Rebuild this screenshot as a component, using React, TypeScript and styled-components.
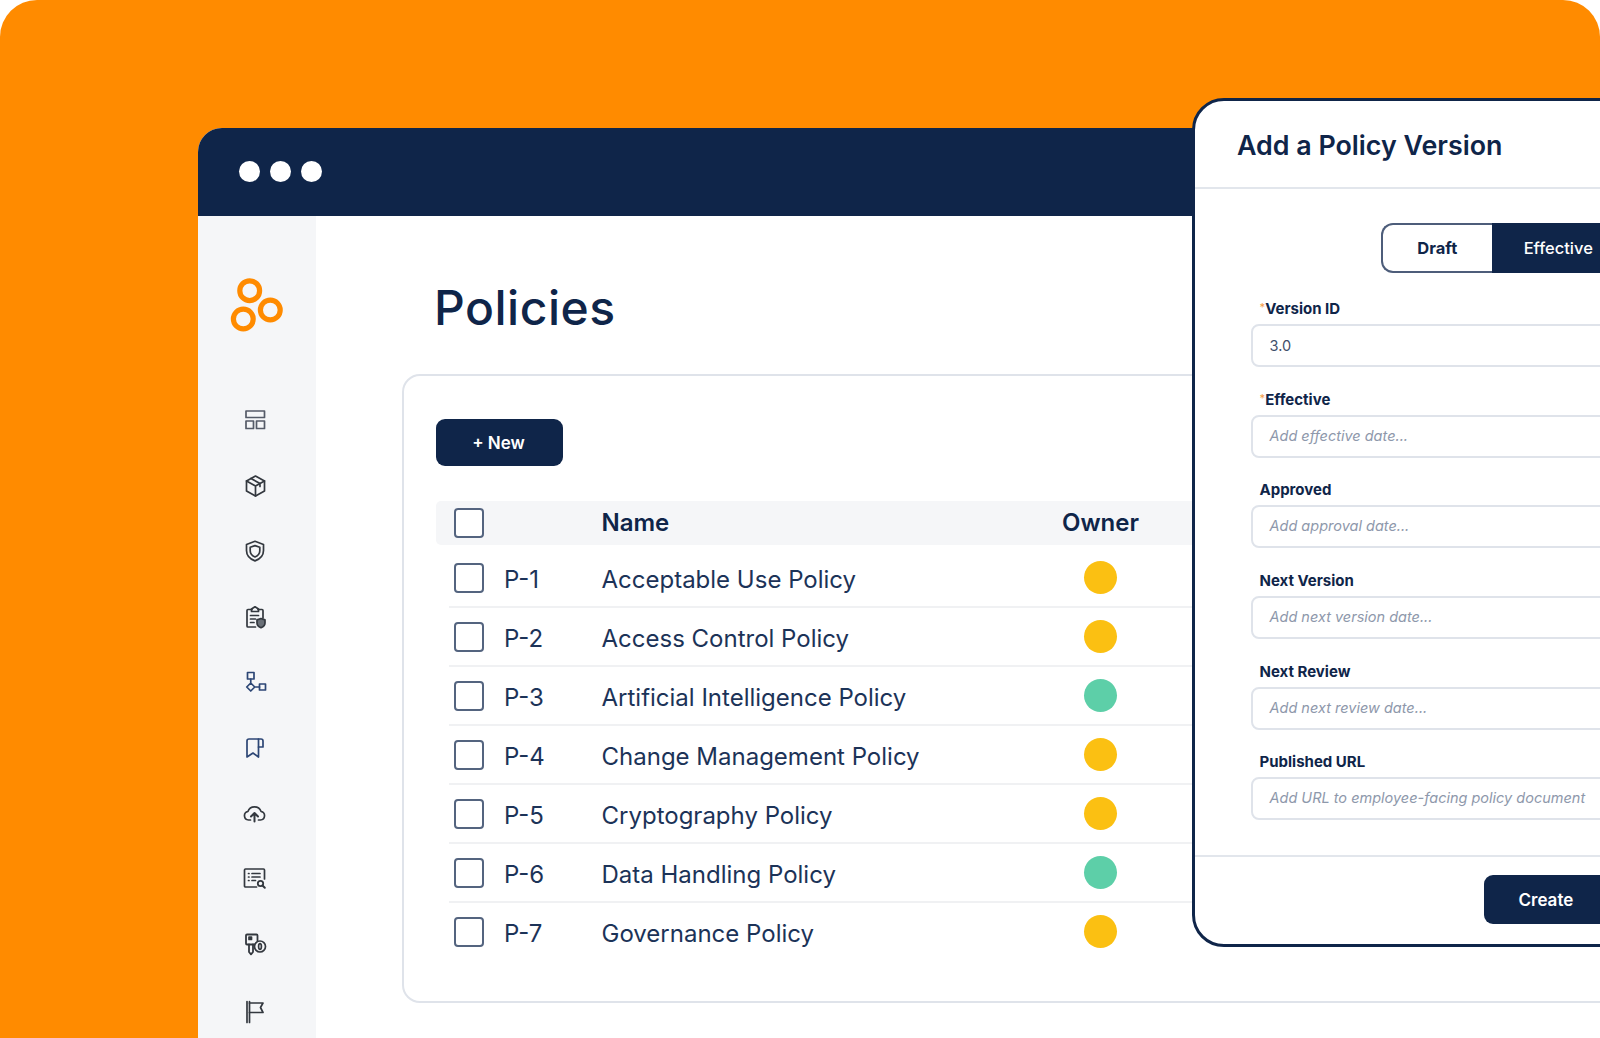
import React from "react";
import styled, { createGlobalStyle, css } from "styled-components";

const navy = "#0f2549";
const orange = "#ff8b00";

const GlobalStyle = createGlobalStyle`
  html, body {
    margin: 0;
    padding: 0;
    background: #fff;
    font-family: Inter, "Liberation Sans", sans-serif;
    color: ${navy};
  }
`;

const Stage = styled.div`
  width: 1600px;
  height: 1038px;
  box-sizing: border-box;
  padding: 128px 0 0 198px;
  background: ${orange};
  border-radius: 37px 37px 0 0;
  overflow: hidden;
`;

const AppWindow = styled.div`
  position: relative;
  width: 1402px;
  height: 910px;
  display: flex;
  flex-direction: column;
  background: #fff;
  border-radius: 24px 0 0 0;
`;

const TitleBar = styled.div`
  flex: none;
  height: 88px;
  box-sizing: border-box;
  padding: 0 0 1px 41px;
  display: flex;
  align-items: center;
  gap: 10px;
  background: ${navy};
  border-radius: 24px 0 0 0;
`;

const Dot = styled.span`
  width: 21px;
  height: 21px;
  border-radius: 50%;
  background: #fff;
`;

const Body = styled.div`
  flex: 1;
  display: flex;
  min-height: 0;
`;

const Sidebar = styled.nav`
  flex: none;
  width: 118px;
  box-sizing: border-box;
  padding-top: 62px;
  display: flex;
  flex-direction: column;
  align-items: center;
  background: #f5f6f8;
`;

const Logo = styled.svg`
  flex: none;
  width: 54px;
  height: 56px;
  margin-bottom: 53px;
`;

const IconList = styled.div`
  flex: none;
  display: grid;
  grid-auto-rows: 65.8px;
  justify-items: center;
  align-items: center;
  padding-right: 5px;
`;

const NavIcon = styled.svg<{ $tone?: string }>`
  width: 24px;
  height: 24px;
  fill: none;
  stroke: ${({ $tone }) => $tone || "#33383f"};
  stroke-width: 1.7;
  stroke-linejoin: round;
  stroke-linecap: round;
  overflow: visible;
`;

const Main = styled.main`
  flex: 1;
  min-width: 0;
  padding: 62px 0 0 86px;
`;

const PageTitle = styled.h1`
  margin: 0 0 36px 32px;
  font-size: 48px;
  line-height: 60px;
  font-weight: 500;
  letter-spacing: 0.5px;
  color: ${navy};
`;

const Card = styled.section`
  width: 1300px;
  height: 629px;
  box-sizing: border-box;
  padding: 43px 0 0 32px;
  border: 2px solid #dfe3ea;
  border-radius: 18px;
`;

const NewButton = styled.button`
  display: block;
  width: 127px;
  height: 47px;
  padding: 0 2px 0 0;
  border: 0;
  border-radius: 9px;
  background: ${navy};
  color: #fff;
  font: 600 17px Inter, sans-serif;
`;

const tableColumns = css`
  display: grid;
  grid-template-columns: 48px 99.5px 465.5px 67px;
  align-items: center;
`;

const HeadRow = styled.div`
  ${tableColumns}
  height: 44px;
  margin-top: 35px;
  padding-left: 18px;
  background: #f5f6f8;
  border-radius: 5px;
  font-size: 24px;
  font-weight: 600;
  color: ${navy};
`;

const HeadCell = styled.span<{ $center?: boolean }>`
  margin-top: -2px;
  justify-self: ${({ $center }) => ($center ? "center" : "start")};
`;

const Row = styled.div<{ $last?: boolean }>`
  ${tableColumns}
  height: 59px;
  box-sizing: border-box;
  margin-left: 13px;
  padding-left: 5px;
  border-bottom: 2px solid ${({ $last }) => ($last ? "transparent" : "#f0f1f3")};
  font-size: 24px;
  color: #1c3358;
`;

const Rows = styled.div`
  margin-top: 4px;
`;

const IdCell = styled.span`
  padding: 3px 0 0 2px;
`;

const NameCell = styled.span`
  padding-top: 3px;
`;

const Checkbox = styled.span`
  display: block;
  width: 30px;
  height: 30px;
  box-sizing: border-box;
  border: 2px solid #54647f;
  border-radius: 4px;
  background: #fff;
`;

const Owner = styled.span<{ $color: string }>`
  justify-self: center;
  width: 33.5px;
  height: 33.5px;
  border-radius: 50%;
  background: ${({ $color }) => $color};
`;

const Modal = styled.aside`
  position: absolute;
  top: -30px;
  left: 993.5px;
  width: 520px;
  height: 849px;
  box-sizing: border-box;
  display: flex;
  flex-direction: column;
  background: #fff;
  border: 3px solid ${navy};
  border-radius: 32px;
`;

const ModalHeader = styled.header`
  flex: none;
  height: 88px;
  box-sizing: border-box;
  padding: 2px 0 0 42.5px;
  display: flex;
  align-items: center;
  border-bottom: 2px solid #e2e6ec;
`;

const ModalTitle = styled.h2`
  margin: 0;
  font-size: 26.8px;
  font-weight: 600;
  color: ${navy};
`;

const Toggle = styled.div`
  display: flex;
  height: 50px;
  margin: 34px 0 0 186.5px;
`;

const ToggleOption = styled.div<{ $active?: boolean }>`
  display: flex;
  align-items: center;
  box-sizing: border-box;
  justify-content: ${({ $active }) => ($active ? "flex-start" : "center")};
  width: ${({ $active }) => ($active ? "220px" : "112.5px")};
  padding-left: ${({ $active }) => ($active ? "32px" : "0")};
  font-size: 16.5px;
  font-weight: ${({ $active }) => ($active ? 500 : 700)};
  color: ${({ $active }) => ($active ? "#fff" : navy)};
  background: ${({ $active }) => ($active ? navy : "#fff")};
  border: ${({ $active }) => ($active ? "none" : "2px solid #4d5d7a")};
  border-right: none;
  border-radius: ${({ $active }) => ($active ? "0" : "12px 0 0 12px")};
`;

const Form = styled.div`
  margin: 24px 0 0 56px;
  display: grid;
  grid-auto-rows: 70px;
  row-gap: 20.7px;
`;

const Field = styled.div`
  display: flex;
  flex-direction: column;
`;

const Label = styled.div`
  height: 22px;
  margin: 0 0 5px 9px;
  font-size: 15px;
  line-height: 24px;
  font-weight: 700;
  color: ${navy};
`;

const Required = styled.span`
  font-size: 11px;
  font-weight: 500;
  line-height: 0;
  vertical-align: 3px;
  color: #f7a04b;
`;

const Input = styled.div<{ $filled?: boolean }>`
  width: 440px;
  height: 43px;
  box-sizing: border-box;
  padding: 0 0 ${({ $filled }) => ($filled ? "0" : "2px")} 17px;
  display: flex;
  align-items: center;
  border: 2px solid #dfe3ea;
  border-radius: 8px;
  font-size: 14.5px;
  font-style: ${({ $filled }) => ($filled ? "normal" : "italic")};
  color: ${({ $filled }) => ($filled ? "#3f4f6b" : "#8e98ab")};
`;

const Footer = styled.footer`
  margin-top: 35px;
  padding: 18px 0 0 289px;
  border-top: 2px solid #e2e6ec;
`;

const CreateButton = styled.button`
  display: block;
  width: 200px;
  height: 49px;
  padding: 0 0 0 35px;
  border: 0;
  border-radius: 9px;
  background: ${navy};
  color: #fff;
  font: 600 17px Inter, sans-serif;
  text-align: left;
`;

const policies = [
  { id: "P-1", name: "Acceptable Use Policy", color: "#fbc012" },
  { id: "P-2", name: "Access Control Policy", color: "#fbc012" },
  { id: "P-3", name: "Artificial Intelligence Policy", color: "#5dcfa8" },
  { id: "P-4", name: "Change Management Policy", color: "#fbc012" },
  { id: "P-5", name: "Cryptography Policy", color: "#fbc012" },
  { id: "P-6", name: "Data Handling Policy", color: "#5dcfa8" },
  { id: "P-7", name: "Governance Policy", color: "#fbc012" },
];

const fields = [
  { label: "Version ID", required: true, value: "3.0" },
  { label: "Effective", required: true, hint: "Add effective date..." },
  { label: "Approved", hint: "Add approval date..." },
  { label: "Next Version", hint: "Add next version date..." },
  { label: "Next Review", hint: "Add next review date..." },
  { label: "Published URL", hint: "Add URL to employee-facing policy document" },
];

const navIcons: { tone?: string; body: React.ReactNode }[] = [
  {
    tone: "#555b68",
    body: (
      <>
        <rect x="3" y="3" width="18.500" height="6.500" />
        <rect x="3" y="13" width="7.500" height="7.500" />
        <rect x="13.500" y="13" width="8" height="7.500" />
      </>
    ),
  },
  {
    body: (
      <>
        <path d="M12.500 2 21.500 7v10l-9 5-9-5V7z" />
        <path d="M3.500 7l9 5 9-5M12.500 12v10M8 4.500l9 5v3" />
      </>
    ),
  },
  {
    body: (
      <>
        <path d="M12 2.300 20.500 5.500v6c0 5-3.600 8.600-8.500 10.400C7.100 20.100 3.500 16.500 3.500 11.500v-6z" />
        <path d="M12 6.600 16.800 8.300v3.400c0 2.900-2 5-4.800 6.300-2.800-1.300-4.800-3.400-4.800-6.300V8.300z" />
      </>
    ),
  },
  {
    body: (
      <>
        <path d="M12.500 22H5a1 1 0 0 1-1-1V5.500a1 1 0 0 1 1-1h4M15 4.500h4a1 1 0 0 1 1 1V13" />
        <path d="M8.500 6.500V4L12 1.800 15.500 4v2.500z" />
        <path d="M7.500 10.500h8M7.500 14h5M7.500 17.500h3.500" />
        <path
          d="M18 13.500l4 1.400v3c0 2.300-1.700 3.800-4 4.800-2.300-1-4-2.500-4-4.800v-3z"
          fill="#6a7078"
        />
      </>
    ),
  },
  {
    tone: "#2c4675",
    body: (
      <>
        <rect x="4.500" y="1.500" width="6.500" height="6.500" />
        <path d="M7.750 8v4M7.750 12l4 4-4 4-4-4zM11.750 16H16.500" />
        <rect x="16.500" y="13" width="6" height="6" />
      </>
    ),
  },
  {
    tone: "#2c4675",
    body: (
      <g transform="translate(0 -1)">
        <path d="M15.500 3H6a2 2 0 0 0-2 2v16l6-4 5.500 4z" />
        <path d="M15.500 3H18a2 2 0 0 1 2 2v6h-4.500" />
      </g>
    ),
  },
  {
    body: (
      <g transform="translate(-.5 -2)">
        <path d="M8 19H6a4.300 4.300 0 0 1-.6-8.500 7 7 0 0 1 13.200 0A4.300 4.300 0 0 1 18 19h-2" />
        <path d="M12 20.500V12M8.500 15.500 12 12l3.500 3.500" strokeWidth="2" />
      </g>
    ),
  },
  {
    body: (
      <g transform="translate(-.5 -2)">
        <path d="M14 21H3a1 1 0 0 1-1-1V4a1 1 0 0 1 1-1h18a1 1 0 0 1 1 1v9" strokeWidth="1.700" />
        <path d="M6 7.500h.5M6 11h.5M6 14.500h.5M9.500 7.500h8M9.500 11h8M9.500 14.500H13" />
        <circle cx="18" cy="17.500" r="2.700" strokeWidth="1.800" />
        <path d="M20 19.500l2.300 2.300" strokeWidth="2" />
      </g>
    ),
  },
  {
    body: (
      <g transform="translate(0 -2)">
        <rect x="3" y="2.500" width="11.500" height="10" rx="1" strokeWidth="1.800" />
        <rect x="6" y="5" width="2.500" height="2.500" fill="#33383f" />
        <path d="M6 12.500V20l2 2.300 2-2.300v-7.500" strokeWidth="1.800" />
        <circle cx="17" cy="14.500" r="5.500" fill="#f5f6f8" />
        <ellipse cx="17" cy="14.500" rx="1.400" ry="2.800" />
      </g>
    ),
  },
  {
    body: (
      <>
        <path d="M4 1.500v21M6.500 1.500v21" />
        <path d="M6.500 3H20l-2.500 4.500L20 12.500H6.500" strokeWidth="1.700" />
      </>
    ),
  },
];

export default function App() {
  return (
    <>
      <GlobalStyle />
      <Stage>
        <AppWindow>
          <TitleBar>
            <Dot />
            <Dot />
            <Dot />
          </TitleBar>
          <Body>
            <Sidebar>
              <Logo viewBox="-1 0 54 56">
                <g fill="none" stroke={orange} strokeWidth="5.200">
                  <circle cx="18.700" cy="12.700" r="9.900" />
                  <circle cx="39.300" cy="32" r="9.900" />
                  <circle cx="12.300" cy="41" r="9.900" />
                </g>
              </Logo>
              <IconList>
                {navIcons.map((icon, index) => (
                  <NavIcon key={index} viewBox="0 0 24 24" $tone={icon.tone}>
                    {icon.body}
                  </NavIcon>
                ))}
              </IconList>
            </Sidebar>
            <Main>
              <PageTitle>Policies</PageTitle>
              <Card>
                <NewButton>+ New</NewButton>
                <HeadRow>
                  <Checkbox />
                  <span />
                  <HeadCell>Name</HeadCell>
                  <HeadCell $center>Owner</HeadCell>
                </HeadRow>
                <Rows>
                  {policies.map((policy, index) => (
                    <Row key={policy.id} $last={index === policies.length - 1}>
                      <Checkbox />
                      <IdCell>{policy.id}</IdCell>
                      <NameCell>{policy.name}</NameCell>
                      <Owner $color={policy.color} />
                    </Row>
                  ))}
                </Rows>
              </Card>
            </Main>
          </Body>
          <Modal>
            <ModalHeader>
              <ModalTitle>Add a Policy Version</ModalTitle>
            </ModalHeader>
            <Toggle>
              <ToggleOption>Draft</ToggleOption>
              <ToggleOption $active>Effective</ToggleOption>
            </Toggle>
            <Form>
              {fields.map((field) => (
                <Field key={field.label}>
                  <Label>
                    {field.required && <Required>*</Required>}
                    {field.label}
                  </Label>
                  <Input $filled={!!field.value}>{field.value || field.hint}</Input>
                </Field>
              ))}
            </Form>
            <Footer>
              <CreateButton>Create</CreateButton>
            </Footer>
          </Modal>
        </AppWindow>
      </Stage>
    </>
  );
}
